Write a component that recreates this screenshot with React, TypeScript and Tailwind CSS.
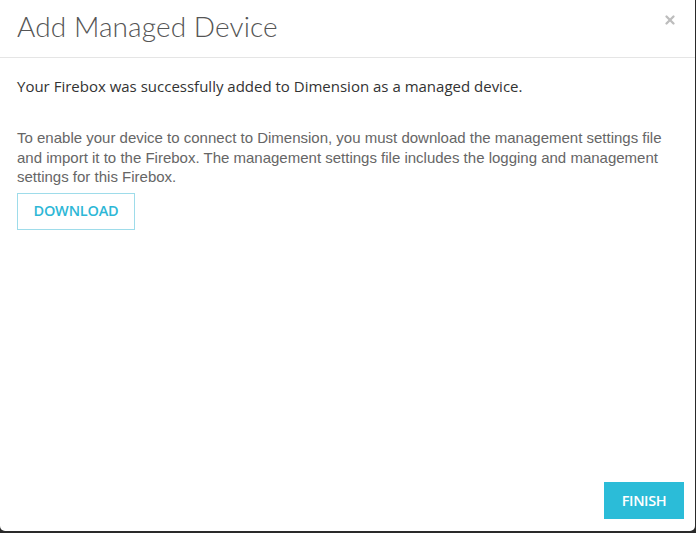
import { X } from 'lucide-react';

export default function App() {
  return (
    <div className="w-[696px] h-[533px] bg-[#2a2a2a] overflow-hidden">
      <div className="w-[695px] h-[531px] bg-white rounded-b-[5px] flex flex-col">
        <header className="h-[58px] border-b border-[#e5e5e5] flex items-start justify-between pl-[17px] pr-[18px]">
          <h1 className="mt-[8px] text-[28px] leading-[36px] text-[#555] font-['Lato',sans-serif] font-light tracking-[0.1px]">
            Add Managed Device
          </h1>
          <button className="mt-[13px] text-[#bdbdbd]" title="Close">
            <X size={14} strokeWidth={4} />
          </button>
        </header>

        <main className="flex-1 px-[17px] pt-[18px] flex flex-col">
          <p className="text-[15px] leading-[21px] text-[#333] font-['Open_Sans',sans-serif]">
            Your Firebox was successfully added to Dimension as a managed device.
          </p>
          <p
            className="mt-[31px] text-[15px] leading-[19.5px] text-[#666] pr-[4px]"
            style={{ fontFamily: '"Liberation Sans", Arial, sans-serif' }}
          >
            To enable your device to connect to Dimension, you must download the management settings file and import it to the Firebox. The management settings file includes the logging and management settings for this Firebox.
          </p>
          <div className="mt-[6px]">
            <button className="w-[118px] h-[37px] border border-[#9edcea] text-[#2db7d6] text-[14.5px] font-semibold font-['Open_Sans',sans-serif] tracking-[-0.2px]">
              DOWNLOAD
            </button>
          </div>
        </main>

        <footer className="flex justify-end pr-[11px] pb-[12px]">
          <button className="w-[80px] h-[37px] bg-[#2bbcd8] text-white text-[14.5px] font-semibold font-['Open_Sans',sans-serif] tracking-[-0.4px]">
            FINISH
          </button>
        </footer>
      </div>
    </div>
  );
}
